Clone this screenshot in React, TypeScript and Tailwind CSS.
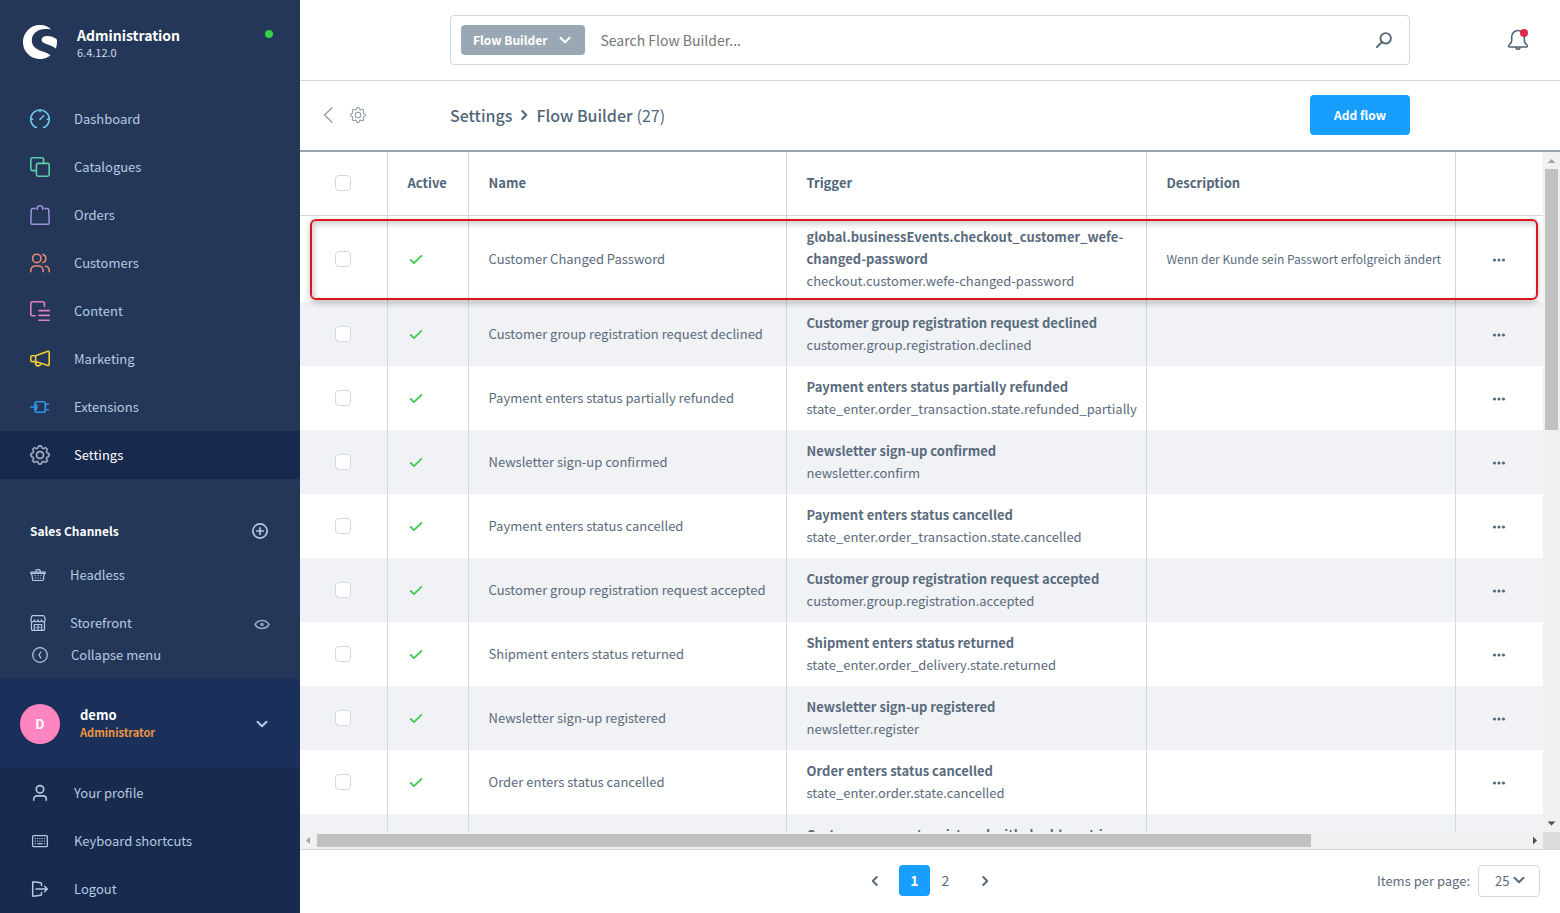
import React, { useState } from 'react';
import { BsGear } from 'react-icons/bs';

type NavItem = { label: string; icon: React.ReactNode; color: string; active?: boolean };
type Flow = { name: string; trigger: string; event: string; description?: string };

const Icon = ({ children, className = 'w-5 h-5', box = 20, stroke = 1.6 }: { children: React.ReactNode; className?: string; box?: number; stroke?: number }) => (
  <svg viewBox={`0 0 ${box} ${box}`} className={`shrink-0 ${className}`} fill="none" stroke="currentColor" strokeWidth={stroke} strokeLinecap="round" strokeLinejoin="round" aria-hidden="true">
    {children}
  </svg>
);

const Chevron = ({ dir, className = 'w-3 h-3' }: { dir: 'down' | 'left' | 'right'; className?: string }) => (
  <Icon box={12} stroke={2} className={className}>
    <path d={dir === 'down' ? 'M1.5 3.8L6 8.3l4.500-4.500' : dir === 'left' ? 'M7.800 2L3.800 6l4 4' : 'M4.200 2l4 4-4 4'} />
  </Icon>
);

const navItems: NavItem[] = [
  {
    label: 'Dashboard',
    color: 'text-[#6fc6ea]',
    icon: <Icon><path d="M6.600 18.200H5.200A9.300 9.300 0 1 1 14.800 18.200H13.400M.8 10.200h2M17.200 10.200h2M10 1v1.700M10 10.500l3.600-3.800" /></Icon>,
  },
  {
    label: 'Catalogues',
    color: 'text-[#5fcda4]',
    icon: <Icon><rect x="6.400" y="6.400" width="12.800" height="12.800" rx="1.600" /><path d="M6.300 13.600H2.400A1.600 1.600 0 0 1 .8 12V2.400A1.600 1.600 0 0 1 2.400.8H12a1.600 1.600 0 0 1 1.600 1.600v4" /></Icon>,
  },
  {
    label: 'Orders',
    color: 'text-[#9d92dc]',
    icon: <Icon stroke={1.5}><path d="M5.300 3.600H2.800a1.500 1.500 0 0 0-1.500 1.400L.8 17.800a1.400 1.400 0 0 0 1.400 1.500h15.600a1.400 1.400 0 0 0 1.400-1.500L18.700 5a1.500 1.500 0 0 0-1.500-1.400h-2.500M7.300 4.500V3a2.700 2.200 0 0 1 5.400 0v1.500" /></Icon>,
  },
  {
    label: 'Customers',
    color: 'text-[#e58a6e]',
    icon: <Icon><circle cx="6.800" cy="5.400" r="4.200" /><path d="M.8 18.700v-1.400a4.300 4.300 0 0 1 4.300-4.300h3.700a4.300 4.300 0 0 1 4.300 4.300v1.400M13 1.400a4.200 4.200 0 0 1 0 8M15.500 13.200a4.300 4.300 0 0 1 3.700 4.200v1.300" /></Icon>,
  },
  {
    label: 'Content',
    color: 'text-[#e07cc4]',
    icon: <Icon><path d="M5 14.800H2.400A1.600 1.600 0 0 1 .8 13.200V2.400A1.600 1.600 0 0 1 2.400.8h10.400a1.600 1.600 0 0 1 1.600 1.600v3M9 9.600h10.200M9 14.400h10.200M9 19.200h10.200" /></Icon>,
  },
  {
    label: 'Marketing',
    color: 'text-[#f2cf2e]',
    icon: <Icon><path d="M5.600 6.700L18 2.300a.9.900 0 0 1 1.200.8v12.500a.9.900 0 0 1-1.200.8L5.600 12.600M5.600 6.700v5.900M5.600 6.700H1.800a1 1 0 0 0-1 1v3.900a1 1 0 0 0 1 1h3.800M5.600 12.700v1.700a2.600 2.600 0 0 0 5.100.6l.2-.7" /></Icon>,
  },
  {
    label: 'Extensions',
    color: 'text-[#2f96ea]',
    icon: <Icon><rect x="5" y="4.700" width="10.300" height="10.600" rx="2" /><path d="M.8 10H5M5 7.500c2.600 0 2.600 5 0 5M15.300 7.300h3.200M15.300 12.700h3.200" /></Icon>,
  },
  { label: 'Settings', color: 'text-[#a9b7c9]', active: true, icon: <BsGear className="w-5 h-5 shrink-0" strokeWidth={0.3} /> },
];

const userItems: NavItem[] = [
  {
    label: 'Your profile',
    color: '',
    icon: <Icon><circle cx="10" cy="6.300" r="3.700" /><path d="M3.700 17.300v-1.200a3.200 3.200 0 0 1 3.200-3.200h6.200a3.200 3.200 0 0 1 3.200 3.200v1.200" /></Icon>,
  },
  {
    label: 'Keyboard shortcuts',
    color: '',
    icon: <Icon stroke={1.3}><rect x="2.600" y="4.600" width="14.800" height="11" rx="1.200" /><path d="M5.300 7.600h.1M7.600 7.600h.1M9.900 7.600h.1M12.200 7.600h.1M14.600 7.600h.1M5.300 10.100h.1M7.600 10.100h.1M9.900 10.100h.1M12.200 10.100h.1M14.600 10.100h.1M5.300 12.700h.1M8 12.700h4M14.600 12.700h.1" /></Icon>,
  },
  {
    label: 'Logout',
    color: '',
    icon: <Icon stroke={1.5}><path d="M11.500 6.500V4.600a.8.800 0 0 0-.7-.8L3.300 2.700a.5.500 0 0 0-.6.500v13.600a.5.500 0 0 0 .6.500l7.500-1.100a.8.800 0 0 0 .7-.8v-2M6 10h11.300M14.600 7.300l2.700 2.700-2.700 2.700" /></Icon>,
  },
];

const flows: Flow[] = [
  {
    name: 'Customer Changed Password',
    trigger: 'global.businessEvents.checkout_customer_wefe-changed-password',
    event: 'checkout.customer.wefe-changed-password',
    description: 'Wenn der Kunde sein Passwort erfolgreich ändert',
  },
  { name: 'Customer group registration request declined', trigger: 'Customer group registration request declined', event: 'customer.group.registration.declined' },
  { name: 'Payment enters status partially refunded', trigger: 'Payment enters status partially refunded', event: 'state_enter.order_transaction.state.refunded_partially' },
  { name: 'Newsletter sign-up confirmed', trigger: 'Newsletter sign-up confirmed', event: 'newsletter.confirm' },
  { name: 'Payment enters status cancelled', trigger: 'Payment enters status cancelled', event: 'state_enter.order_transaction.state.cancelled' },
  { name: 'Customer group registration request accepted', trigger: 'Customer group registration request accepted', event: 'customer.group.registration.accepted' },
  { name: 'Shipment enters status returned', trigger: 'Shipment enters status returned', event: 'state_enter.order_delivery.state.returned' },
  { name: 'Newsletter sign-up registered', trigger: 'Newsletter sign-up registered', event: 'newsletter.register' },
  { name: 'Order enters status cancelled', trigger: 'Order enters status cancelled', event: 'state_enter.order.state.cancelled' },
  { name: 'Double opt-in registration', trigger: 'Customer account registered with double opt-in', event: 'checkout.customer.double_opt_in_registration' },
];

function Sidebar() {
  return (
    <aside className="w-75 shrink-0 flex flex-col bg-[#243758] text-[#b4cae3] overflow-hidden">
      <div className="flex items-start pt-6 pl-[23px] pr-[27px] pb-9">
        <svg viewBox="0 0 34 34" className="w-[34px] h-[34px] mt-px shrink-0" fill="#fff" aria-hidden="true">
          <path d="M28.300 4.400A17 17 0 1 0 27.400 30.500C25.500 28.300 22.300 27.300 18.800 26.200 13.300 24.400 8.800 21.300 8.800 15.500 8.800 8.500 14.800 4 22.500 4c2 0 4 .1 5.800.4z" />
          <path d="M33.900 14.600C30.700 11.800 27.500 11 24.200 11c-3.400 0-5.600 1.500-5.600 3.800 0 3 3.800 3.900 7.400 5.200 2.600 1 5 2 6.900 3.400.9-2.800 1.300-5.700 1-8.800z" />
        </svg>
        <div className="ml-5 grow">
          <div className="text-sm leading-[22px] font-semibold text-white">Administration</div>
          <div className="text-[11px] leading-3 text-[#cfdcec]">6.4.12.0</div>
        </div>
        <span className="w-2 h-2 mt-1.5 rounded-full bg-[#37d046]" />
      </div>

      <nav className="flex flex-col">
        {navItems.map(item => (
          <a key={item.label} href="#" className={`h-12 shrink-0 flex items-center gap-6 pl-[30px] ${item.active ? 'bg-[#17294d] text-white' : ''}`}>
            <span className={item.color}>{item.icon}</span>
            {item.label}
          </a>
        ))}
      </nav>

      <div className="flex flex-col grow min-h-0 pt-[31px]">
        <div className="h-[41px] shrink-0 flex items-center justify-between pl-[30px] pr-8">
          <h2 className="text-xs font-semibold text-white">Sales Channels</h2>
          <button aria-label="Add sales channel">
            <Icon box={16} className="w-4 h-4" stroke={1.7}><circle cx="8" cy="8" r="7.100" /><path d="M8 4.800v6.400M4.800 8h6.400" /></Icon>
          </button>
        </div>
        <a href="#" className="h-12 shrink-0 flex items-center gap-6 pl-[30px]">
          <Icon box={16} className="w-4 h-4" stroke={1.2}>
            <path d="M.8 5h14.400v1.400H.8zM1.600 6.400l1.100 6.300a1 1 0 0 0 1 .8h8.600a1 1 0 0 0 1-.8l1.100-6.300M5.300 5l.8-1.800a1 1 0 0 1 .9-.6h2a1 1 0 0 1 .9.6l.8 1.800M5 8.600h.1M8 8.600h.1M11 8.600h.1M5.500 11h.1M8 11h.1M10.500 11h.1" />
          </Icon>
          Headless
        </a>
        <div className="h-10 shrink-0 flex items-center justify-between pt-2 pr-[30px]">
          <a href="#" className="flex items-center gap-6 pl-[30px]">
            <Icon box={16} className="w-4 h-4" stroke={1.2}>
              <path d="M1.500 7v7.300a1 1 0 0 0 1 1h11a1 1 0 0 0 1-1V7M.8 4.500L1.800 1.200a1 1 0 0 1 .9-.6h10.600a1 1 0 0 1 .9.6l1 3.300c0 3-3.500 3-3.700.3-.2 2.700-3.400 2.700-3.500 0-.1 2.700-3.300 2.700-3.500 0C4.300 7.500.8 7.500.8 4.500zM4.300 15V9.500h7.400V15M8 9.500V15M6.200 12.200v.3M9.800 12.200v.3" />
            </Icon>
            Storefront
          </a>
          <button aria-label="Open storefront" className="text-[#94a7bf]">
            <Icon box={16} className="w-4 h-4" stroke={1.6}><path d="M1 9.500c3.300-5.300 10.700-5.300 14 0-3.300 5.300-10.700 5.300-14 0z" /><circle cx="8" cy="9.500" r="1" /></Icon>
          </button>
        </div>
        <button className="h-8 shrink-0 flex items-center gap-[23px] pl-8">
          <Icon box={16} className="w-4 h-4" stroke={1.200}><circle cx="8" cy="8" r="7.300" /><path d="M8.800 5L7 8l1.800 3" /></Icon>
          Collapse menu
        </button>
      </div>

      <button className="h-[90px] shrink-0 flex items-center pl-5 pr-8 bg-[#1a305b] text-left">
        <span className="w-10 h-10 rounded-full bg-[#ff85c0] text-white font-semibold flex items-center justify-center">D</span>
        <span className="ml-5 pb-0.5 grow flex flex-col">
          <span className="leading-[18px] font-semibold text-white">demo</span>
          <span className="text-[11px] leading-[17px] font-semibold text-[#ee9440]">Administrator</span>
        </span>
        <Chevron dir="down" />
      </button>
      <nav className="flex flex-col bg-[#182a4d]">
        {userItems.map(item => (
          <a key={item.label} href="#" className="h-12 shrink-0 flex items-center gap-6 pl-[30px]">
            {item.icon}
            {item.label}
          </a>
        ))}
      </nav>
    </aside>
  );
}

function Checkbox({ label }: { label: string }) {
  return (
    <input type="checkbox" aria-label={label}
      className="appearance-none block mx-auto w-4 h-4 rounded-sm border border-[#d1d9e0] bg-white checked:bg-[#189eff]" />
  );
}

function FlowTable() {
  return (
    <table className="w-full table-fixed border-collapse text-left">
      <colgroup>
        <col className="w-[87px]" />
        <col className="w-[81px]" />
        <col className="w-[318px]" />
        <col className="w-[360px]" />
        <col />
        <col className="w-[88px]" />
      </colgroup>
      <thead>
        <tr className="h-[63px] border-b border-[#d1d9e0] text-[#52667a]">
          <th className="border-r border-[#d1d9e0]"><Checkbox label="Select all" /></th>
          {['Active', 'Name', 'Trigger', 'Description'].map(title => (
            <th key={title} className="px-5 border-r border-[#d1d9e0] font-semibold">{title}</th>
          ))}
          <th aria-label="Actions" />
        </tr>
      </thead>
      <tbody>
        {flows.map(flow => (
          <tr key={flow.name} className="even:bg-[#f0f2f5]">
            <td className="border-r border-[#d1d9e0]"><Checkbox label={`Select ${flow.name}`} /></td>
            <td className="px-5 border-r border-[#d1d9e0]">
              <Icon box={16} className="w-4 h-4 text-[#3ccc52]" stroke={1.8}><path d="M2.800 9l3.200 3.200 7.500-7.400" /></Icon>
            </td>
            <td className="px-5 border-r border-[#d1d9e0] whitespace-nowrap">{flow.name}</td>
            <td className="px-5 py-[10px] border-r border-[#d1d9e0] leading-[22px]">
              <div className="font-semibold">{flow.trigger}</div>
              <div className="whitespace-nowrap">{flow.event}</div>
            </td>
            <td className="pl-5 border-r border-[#d1d9e0] text-xs whitespace-nowrap overflow-hidden">{flow.description}</td>
            <td>
              <button aria-label={`Actions for ${flow.name}`} className="block mx-auto">
                <svg viewBox="0 0 16 16" className="w-4 h-4" fill="currentColor" aria-hidden="true">
                  <circle cx="3.500" cy="9" r="1.600" /><circle cx="8" cy="9" r="1.600" /><circle cx="12.500" cy="9" r="1.600" />
                </svg>
              </button>
            </td>
          </tr>
        ))}
      </tbody>
    </table>
  );
}

const Arrow = ({ points, className }: { points: string; className: string }) => (
  <svg viewBox="0 0 17 17" className={`w-[17px] h-[17px] shrink-0 ${className}`} fill="currentColor" aria-hidden="true">
    <polygon points={points} />
  </svg>
);

export default function App() {
  const [perPage, setPerPage] = useState('25');
  const [search, setSearch] = useState('');

  return (
    <div className="flex h-screen overflow-hidden bg-white text-[13px] leading-5 text-[#5a6b7d] font-['Source_Sans_Pro','Noto_Sans_CJK_SC',sans-serif]">
      <Sidebar />

      <main className="grow min-w-0 flex flex-col">
        <header className="h-[81px] shrink-0 grid grid-cols-[150px_1fr_150px] items-center border-b border-[#d1d9e0]">
          <div className="col-start-2 h-[50px] flex items-center pl-[10px] pr-[17px] border border-[#d1d9e0] rounded">
            <button className="h-[30px] flex items-center gap-3 px-3 pr-3.5 rounded bg-[#9aa8b5] text-xs text-white font-semibold">
              Flow Builder <Chevron dir="down" />
            </button>
            <input type="text" aria-label="Search" value={search} onChange={e => setSearch(e.target.value)} placeholder="Search Flow Builder..."
              className="grow min-w-0 ml-[15px] text-sm outline-none placeholder:text-[#757575]" />
            <button aria-label="Start search" className="text-[#52667a]">
              <Icon box={16} className="w-4 h-4" stroke={1.900}><circle cx="9.700" cy="6.300" r="5.200" /><path d="M5.800 10.200L1 15" /></Icon>
            </button>
          </div>
          <button aria-label="Notifications" className="relative justify-self-end mr-[31px] text-[#52667a]">
            <Icon box={22} className="w-[22px] h-[22px]" stroke={1.600}>
              <path d="M11 1.500a6.300 6.300 0 0 0-6.300 6.300v3.700c0 2-1 2.700-2.400 4.200-1.200 1.300-.9 2.300.6 2.300h16.200c1.500 0 1.800-1 .6-2.300-1.400-1.500-2.400-2.200-2.400-4.200V7.800A6.300 6.300 0 0 0 11 1.500zM9 18.300a2 2 0 0 0 4 0" />
            </Icon>
            <span className="absolute top-0 right-px w-2 h-2 rounded-full bg-[#de294c]" />
          </button>
        </header>

        <div className="h-[71px] shrink-0 grid grid-cols-[150px_1fr_150px] items-center pb-px border-b-2 border-[#98a3ae]">
          <div className="flex items-center gap-3.5 pl-5 text-[#8b98a6]">
            <a href="#" aria-label="Back"><Icon box={16} className="w-4 h-4" stroke={1.2}><path d="M12 .8L4.500 8l7.500 7.200" /></Icon></a>
            <a href="#" aria-label="Settings"><BsGear className="w-4 h-4" /></a>
          </div>
          <div className="flex items-center justify-between">
            <h1 className="flex items-center text-base font-medium text-[#52667a]">
              Settings <Chevron dir="right" className="w-3 h-3 mx-1.5" /> Flow Builder
              <span className="ml-1 font-normal">(27)</span>
            </h1>
            <button className="h-10 px-6 rounded bg-[#189eff] text-xs text-white font-semibold">Add flow</button>
          </div>
        </div>

        <div className="grow min-h-0 flex">
          <div className="relative grow min-w-0 overflow-hidden">
            <FlowTable />
            <div className="absolute top-[67px] left-[10px] right-[5px] h-[81px] rounded-md border-2 border-[#dc161c] shadow-[0_3px_6px_rgba(0,0,0,0.25),inset_2px_3px_6px_rgba(0,0,0,0.2)] pointer-events-none" />
          </div>
          <div className="w-[17px] shrink-0 flex flex-col bg-[#f1f1f1]">
            <Arrow points="4.500,11 8.500,7 12.500,11" className="text-[#a3a3a3]" />
            <div className="h-[261px] mx-0.5 bg-[#c1c1c1]" />
            <Arrow points="4.500,6.500 8.500,10.500 12.500,6.500" className="mt-auto text-[#505050]" />
          </div>
        </div>
        <div className="h-[17px] shrink-0 flex bg-[#f1f1f1]">
          <Arrow points="10,5 6,8.500 10,12" className="text-[#a3a3a3]" />
          <div className="grow flex items-center"><div className="w-[82.2%] h-[13px] bg-[#c1c1c1]" /></div>
          <Arrow points="7,4.500 11,8.500 7,12.500" className="text-[#505050]" />
          <div className="w-[17px] bg-[#dcdcdc]" />
        </div>

        <footer className="h-16 shrink-0 grid grid-cols-[1fr_auto_1fr] items-center pb-0.5 border-t border-[#d1d9e0]">
          <div className="col-start-2 flex items-center">
            <button aria-label="Previous page" className="w-8 h-8 mr-2 flex items-center justify-center"><Chevron dir="left" /></button>
            <button className="w-[31px] h-[31px] pb-0.5 rounded-sm bg-[#189eff] text-white text-sm font-semibold">1</button>
            <button className="w-[31px] h-[31px] pb-0.5 text-sm">2</button>
            <button aria-label="Next page" className="w-8 h-8 ml-2 flex items-center justify-center"><Chevron dir="right" /></button>
          </div>
          <div className="justify-self-end flex items-center gap-2 mr-5">
            <label htmlFor="per-page">Items per page:</label>
            <div className="relative">
              <select id="per-page" value={perPage} onChange={e => setPerPage(e.target.value)}
                className="appearance-none w-[62px] h-8 pl-4 border border-[#d1d9e0] rounded bg-white">
                <option>10</option>
                <option>25</option>
                <option>50</option>
              </select>
              <Chevron dir="down" className="absolute right-[15px] top-[9px] w-3 h-3 pointer-events-none" />
            </div>
          </div>
        </footer>
      </main>
    </div>
  );
}
